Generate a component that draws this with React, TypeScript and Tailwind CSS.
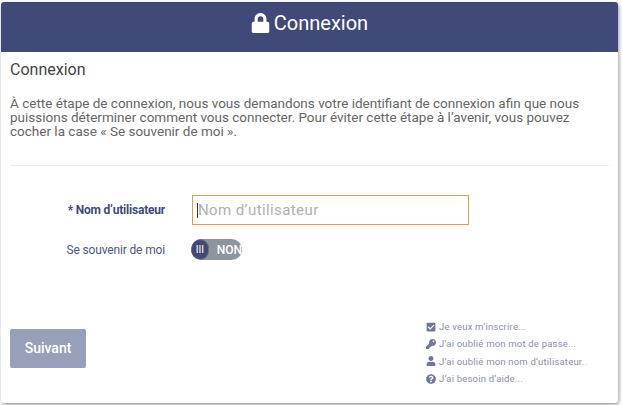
import { FaCheckSquare, FaKey, FaLock, FaQuestionCircle, FaUser } from 'react-icons/fa'

const links = [
  { icon: <FaCheckSquare className="w-[10px] h-[10px]" />, label: 'Je veux m’inscrire...' },
  { icon: <FaKey className="w-[10px] h-[10px]" />, label: 'J’ai oublié mon mot de passe...' },
  { icon: <FaUser className="w-[10px] h-[10px]" />, label: 'J’ai oublié mon nom d’utilisateur..' },
  { icon: <FaQuestionCircle className="w-[10px] h-[10px]" />, label: 'J’ai besoin d’aide...' },
]

export default function App() {
  return (
    <div className="w-[622px] h-[405px] bg-white pt-[2px] pl-[1px] font-['Roboto',sans-serif] overflow-hidden">
      <div className="w-[617px] h-[401px] bg-white rounded-[3px] shadow-[1px_2px_4px_rgba(0,0,0,0.4)] flex flex-col">
        {/* Header */}
        <div className="h-[50px] shrink-0 bg-[#3f4a78] rounded-t-[3px] flex items-center justify-center gap-[4px] pb-[8px] text-white">
          <FaLock className="w-[19px] h-[20px]" />
          <span className="text-[20px] leading-none">Connexion</span>
        </div>

        <div className="flex-1 flex flex-col px-[9px]">
          <h2 className="mt-[8px] text-[16px] leading-[19px] text-[#444444]">Connexion</h2>
          <p className="mt-[17px] text-[13.5px] leading-[14px] text-[#666666]">
            À cette étape de connexion, nous vous demandons votre identifiant de connexion afin que nous puissions déterminer comment vous connecter. Pour éviter cette étape à l’avenir, vous pouvez cocher la case « Se souvenir de moi ».
          </p>
          <hr className="mt-[27px] border-t border-[#eeeeee]" />

          {/* Form */}
          <div className="mt-[29px] flex items-center">
            <label className="w-[155px] text-right text-[12px] tracking-[-0.2px] font-bold text-[#3f4a78]">* Nom d’utilisateur</label>
            <div className="ml-[27px] w-[277px] h-[30px] border border-[#e0a040] flex items-center pl-[4px]">
              <div className="w-px h-[15px] bg-[#333333]" />
              <span className="text-[15px] tracking-[0.4px] text-[#b0b0b0]">Nom d’utilisateur</span>
            </div>
          </div>
          <div className="mt-[14px] flex items-center">
            <label className="w-[155px] text-right text-[12px] tracking-[-0.15px] text-[#4f5880]">Se souvenir de moi</label>
            <div className="ml-[26px] w-[51px] h-[21px] rounded-full bg-[#8f959f] flex items-center overflow-hidden">
              <div className="w-[21px] h-[21px] rounded-full bg-[#3f4a78] border border-[#6a7080] flex items-center justify-center text-white text-[10px] leading-none">III</div>
              <span className="ml-[8px] text-[12px] font-medium text-white">NON</span>
            </div>
          </div>

          {/* Footer */}
          <div className="mt-[58px] flex justify-between">
            <button className="mt-[11px] w-[76px] h-[39px] bg-[#989fb8] rounded-[2px] text-white text-[14px] font-medium">Suivant</button>
            <ul className="w-[183px] text-[9.5px] leading-[17.3px] tracking-[0.2px] text-[#8a8fa8]">
              {links.map((link) => (
                <li key={link.label} className="flex items-center gap-[3px]">
                  <span className="text-[#6f7697]">{link.icon}</span>
                  <span className="whitespace-nowrap">{link.label}</span>
                </li>
              ))}
            </ul>
          </div>
        </div>
      </div>
    </div>
  )
}
